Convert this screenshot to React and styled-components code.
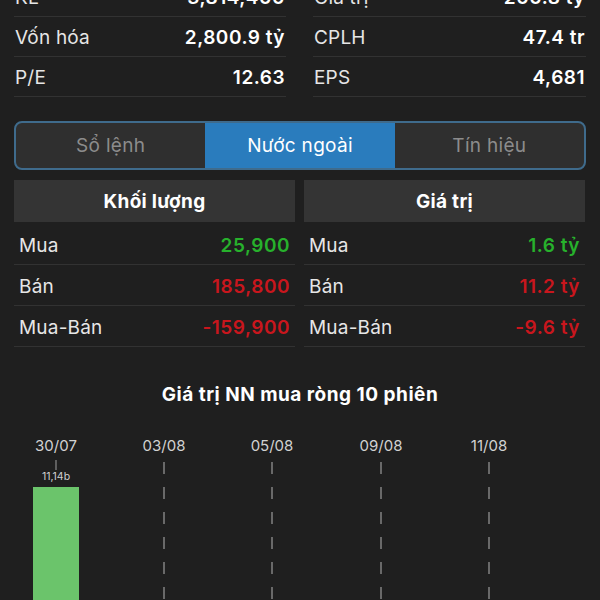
import React from "react";
import styled, { createGlobalStyle } from "styled-components";

const GlobalStyle = createGlobalStyle`
  html, body { margin: 0; padding: 0; background: #1f1f1f; }
  body { font-family: Inter, "Noto Sans", "Liberation Sans", sans-serif; color: #f2f2f2; }
`;

const Page = styled.div`
  width: 600px;
  height: 600px;
  overflow: hidden;
  background: #1f1f1f;
`;

const StatsGrid = styled.div`
  display: grid;
  grid-template-columns: 272px 273px;
  column-gap: 27px;
  padding-left: 14px;
  margin-top: -23px;
`;

const StatRow = styled.div`
  height: 40px;
  display: flex;
  align-items: center;
  justify-content: space-between;
  padding: 1px 1px 0;
  border-bottom: 1px solid #323232;
  box-sizing: border-box;
  font-size: 19px;
`;

const Label = styled.span`
  color: #e6e6e6;
  font-weight: 400;
  letter-spacing: 0.2px;
`;

const Value = styled.span`
  color: ${(p) => p.$color || "#ffffff"};
  font-weight: 600;
  letter-spacing: 0.5px;
`;

const Tabs = styled.div`
  margin: 24px 14px 0;
  height: 49px;
  box-sizing: border-box;
  border: 2px solid #3f6b8c;
  border-radius: 8px;
  overflow: hidden;
  display: grid;
  grid-template-columns: repeat(3, 1fr);
  background: #2f2f2f;
`;

const Tab = styled.div`
  display: flex;
  align-items: center;
  justify-content: center;
  font-size: 19px;
  letter-spacing: 0.3px;
  color: ${(p) => (p.$active ? "#ffffff" : "#8c8c8c")};
  background: ${(p) => (p.$active ? "#2a7cbd" : "transparent")};
`;

const Tables = styled.div`
  margin: 10px 15px 0 14px;
  display: grid;
  grid-template-columns: 1fr 1fr;
  column-gap: 9px;
`;

const Table = styled.div`
  display: flex;
  flex-direction: column;
`;

const TableHead = styled.div`
  height: 42px;
  background: #343434;
  display: flex;
  align-items: center;
  justify-content: center;
  font-size: 19px;
  font-weight: 700;
  letter-spacing: 0.3px;
  color: #ffffff;
  margin-bottom: 2px;
`;

const FlowRow = styled.div`
  height: 41px;
  box-sizing: border-box;
  display: flex;
  align-items: center;
  justify-content: space-between;
  padding: 2px ${(p) => p.$pr}px 0 ${(p) => p.$pl}px;
  border-bottom: 1px solid #323232;
  font-size: 19px;
`;

const ChartTitle = styled.div`
  margin-top: 37px;
  height: 22px;
  line-height: 22px;
  text-align: center;
  font-size: 19px;
  font-weight: 700;
  letter-spacing: 0.5px;
  color: #ffffff;
`;

const ChartSvg = styled.svg`
  display: block;
  width: 600px;
  height: 200px;
`;

const GREEN = "#27b12c";
const RED = "#c9161d";

const stats = [
  ["KL", "3,814,400", "Giá trị", "200.8 tỷ"],
  ["Vốn hóa", "2,800.9 tỷ", "CPLH", "47.4 tr"],
  ["P/E", "12.63", "EPS", "4,681"],
];

const volume = [
  ["Mua", "25,900", GREEN],
  ["Bán", "185,800", RED],
  ["Mua-Bán", "-159,900", RED],
];

const value = [
  ["Mua", "1.6 tỷ", GREEN],
  ["Bán", "11.2 tỷ", RED],
  ["Mua-Bán", "-9.6 tỷ", RED],
];

const dates = ["30/07", "03/08", "05/08", "09/08", "11/08"];
const xs = [56, 164, 272, 381, 489];

function Chart() {
  return (
    <ChartSvg viewBox="0 0 600 200">
      {dates.map((d, i) => (
        <text
          key={d}
          x={xs[i]}
          y={45}
          textAnchor="middle"
          fontSize="15"
          fill="#d2d2d2"
          fontFamily="Inter, 'Noto Sans', sans-serif"
        >
          {d}
        </text>
      ))}
      {xs.slice(1).map((x) => (
        <line
          key={x}
          x1={x}
          x2={x}
          y1={56}
          y2={200}
          stroke="#7c7c7c"
          strokeWidth="1.6"
          strokeDasharray="12 13"
        />
      ))}
      <line x1={56} x2={56} y1={54} y2={64} stroke="#8a8a8a" strokeWidth="1.2" />
      <text
        x={56}
        y={74}
        textAnchor="middle"
        fontSize="10.5"
        fill="#d0d0d0"
        fontFamily="Inter, 'Noto Sans', sans-serif"
      >
        11,14b
      </text>
      <rect x={33} y={81} width={46} height={130} fill="#6bc46b" />
    </ChartSvg>
  );
}

export default function App() {
  return (
    <Page>
      <GlobalStyle />
      <StatsGrid>
        {stats.map(([l1, v1, l2, v2]) => (
          <React.Fragment key={l1}>
            <StatRow>
              <Label>{l1}</Label>
              <Value>{v1}</Value>
            </StatRow>
            <StatRow>
              <Label>{l2}</Label>
              <Value>{v2}</Value>
            </StatRow>
          </React.Fragment>
        ))}
      </StatsGrid>
      <Tabs>
        <Tab>Sổ lệnh</Tab>
        <Tab $active>Nước ngoài</Tab>
        <Tab>Tín hiệu</Tab>
      </Tabs>
      <Tables>
        <Table>
          <TableHead>Khối lượng</TableHead>
          {volume.map(([l, v, c]) => (
            <FlowRow key={l} $pl={5} $pr={5}>
              <Label>{l}</Label>
              <Value $color={c}>{v}</Value>
            </FlowRow>
          ))}
        </Table>
        <Table>
          <TableHead>Giá trị</TableHead>
          {value.map(([l, v, c]) => (
            <FlowRow key={l} $pl={5} $pr={5}>
              <Label>{l}</Label>
              <Value $color={c}>{v}</Value>
            </FlowRow>
          ))}
        </Table>
      </Tables>
      <ChartTitle>Giá trị NN mua ròng 10 phiên</ChartTitle>
      <Chart />
    </Page>
  );
}
